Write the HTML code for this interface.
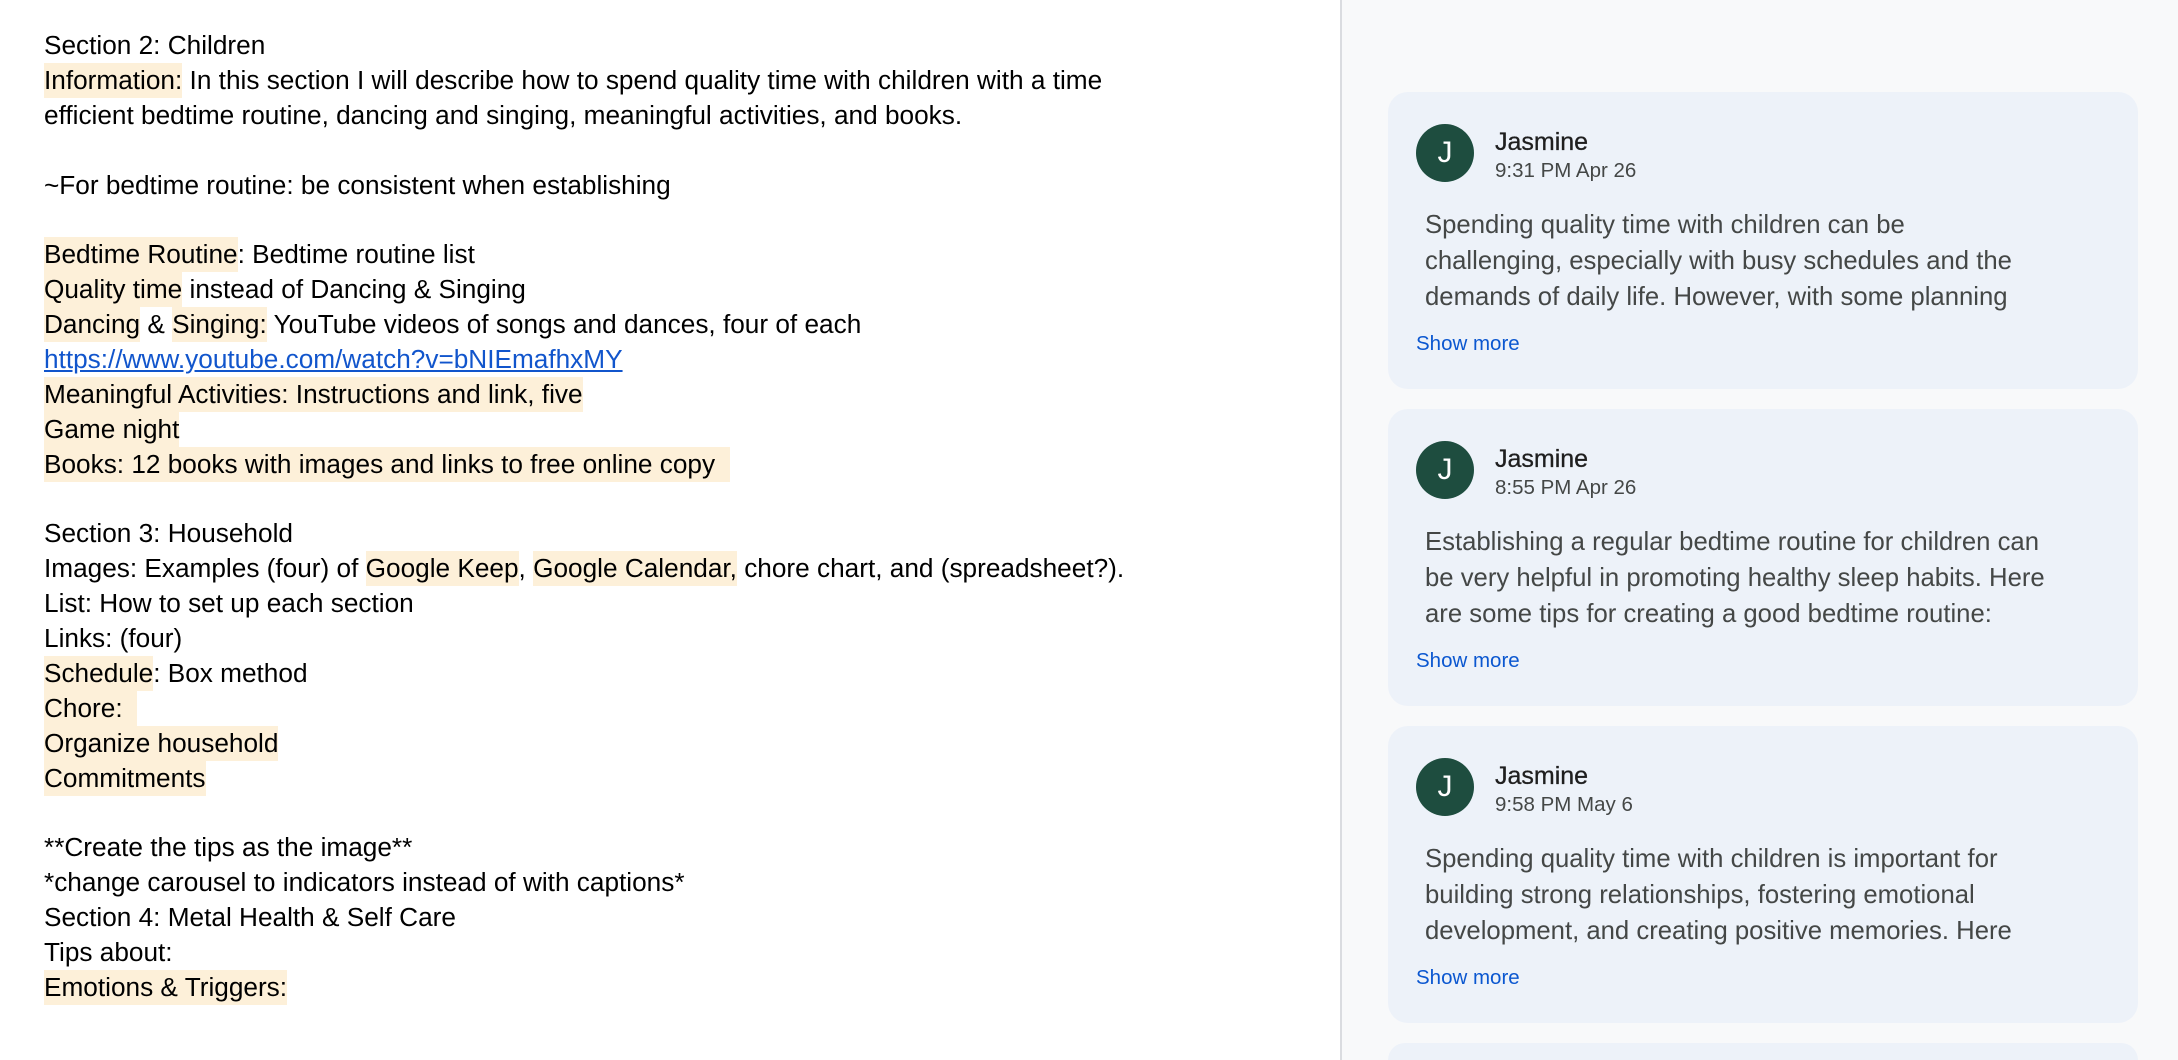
<!DOCTYPE html>
<html><head><meta charset="utf-8"><style>
*{margin:0;padding:0;box-sizing:border-box}
html,body{width:2178px;height:1060px;overflow:hidden}
body{background:#fff;position:relative;font-family:"Liberation Sans",Arial,sans-serif}
#doc{position:absolute;left:44px;top:28px;font-size:26.2px;line-height:34.9px;color:#000}
#doc div{height:34.9px;white-space:nowrap}
.h{background:#fdf0d9;display:inline-block;height:34.9px}
a{color:#1155cc;text-decoration:underline}
#panel{position:absolute;left:1340px;top:0;width:838px;height:1060px;background:#f8f9fa;border-left:2px solid #dadce0;overflow:hidden}
.card{position:absolute;left:46px;width:750px;height:297px;background:#edf2f9;border-radius:20px}
.av{position:absolute;left:28px;top:32px;width:58px;height:58px;border-radius:50%;background:#1e4d3f;color:#fff;font-size:30px;text-align:center;line-height:58px}
.nm{position:absolute;left:107px;top:36px;font-size:25px;color:#1f1f1f;font-weight:500;-webkit-text-stroke:0.3px #1f1f1f}
.tm{position:absolute;left:107px;top:67px;font-size:20.5px;color:#444746}
.bd{position:absolute;left:37px;top:115px;white-space:nowrap;font-size:25.7px;line-height:36px;color:#444746}
.sm{position:absolute;left:28px;top:240px;font-size:20.5px;color:#0b57d0}
</style></head><body>
<div id="doc">
<div>Section 2: Children</div>
<div><span class="h">Information:</span> In this section I will describe how to spend quality time with children with a time</div>
<div>efficient bedtime routine, dancing and singing, meaningful activities, and books.</div>
<div></div>
<div>~For bedtime routine: be consistent when establishing</div>
<div></div>
<div><span class="h">Bedtime Routine</span>: Bedtime routine list</div>
<div><span class="h">Quality time</span> instead of Dancing &amp; Singing</div>
<div><span class="h">Dancing</span> &amp; <span class="h">Singing:</span> YouTube videos of songs and dances, four of each</div>
<div><a>https://www.youtube.com/watch?v=bNIEmafhxMY</a></div>
<div><span class="h">Meaningful Activities: Instructions and link, five</span></div>
<div><span class="h">Game night</span></div>
<div><span class="h">Books: 12 books with images and links to free online copy &nbsp;</span></div>
<div></div>
<div>Section 3: Household</div>
<div>Images: Examples (four) of <span class="h">Google Keep</span>, <span class="h">Google Calendar,</span> chore chart, and (spreadsheet?).</div>
<div>List: How to set up each section</div>
<div>Links: (four)</div>
<div><span class="h">Schedule</span>: Box method</div>
<div><span class="h">Chore: &nbsp;</span></div>
<div><span class="h">Organize household</span></div>
<div><span class="h">Commitments</span></div>
<div></div>
<div>**Create the tips as the image**</div>
<div>*change carousel to indicators instead of with captions*</div>
<div>Section 4: Metal Health &amp; Self Care</div>
<div>Tips about:</div>
<div><span class="h">Emotions &amp; Triggers:</span></div>
</div>
<div id="panel">
<div class="card" style="top:92px"><div class="av">J</div><div class="nm">Jasmine</div><div class="tm">9:31 PM Apr 26</div><div class="bd">Spending quality time with children can be<br>challenging, especially with busy schedules and the<br>demands of daily life. However, with some planning</div><div class="sm">Show more</div></div>
<div class="card" style="top:409px"><div class="av">J</div><div class="nm">Jasmine</div><div class="tm">8:55 PM Apr 26</div><div class="bd">Establishing a regular bedtime routine for children can<br>be very helpful in promoting healthy sleep habits. Here<br>are some tips for creating a good bedtime routine:</div><div class="sm">Show more</div></div>
<div class="card" style="top:726px"><div class="av">J</div><div class="nm">Jasmine</div><div class="tm">9:58 PM May 6</div><div class="bd">Spending quality time with children is important for<br>building strong relationships, fostering emotional<br>development, and creating positive memories. Here</div><div class="sm">Show more</div></div>
<div class="card" style="top:1043px;height:17px;border-radius:20px 20px 0 0"></div>
</div>
</body></html>
